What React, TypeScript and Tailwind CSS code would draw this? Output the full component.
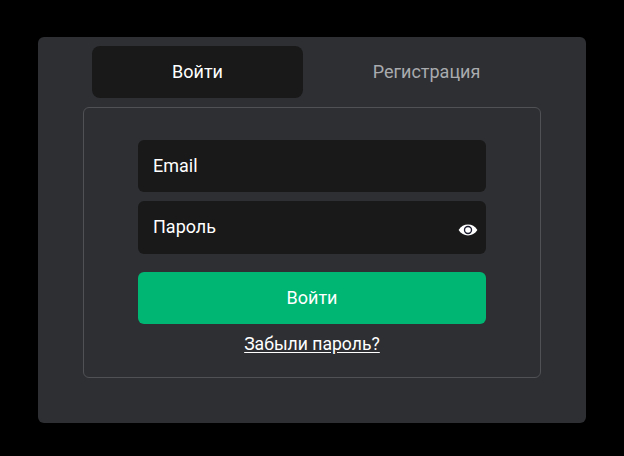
const font = "font-['Roboto','Noto_Sans',sans-serif]";

const Eye = () => (
  <svg width="20" height="14" viewBox="0 0 20 14" className="absolute right-[8px] top-[22px]">
    <path d="M0.6 7C3 3.2 6.2 1.6 10 1.6S17 3.2 19.4 7C17 10.8 13.8 12.4 10 12.4S3 10.8 0.6 7Z" fill="#fff" />
    <circle cx="10" cy="7" r="4.2" fill="#1c1c30" />
    <circle cx="10" cy="7" r="2.8" fill="#fff" />
  </svg>
);

export default function App() {
  return (
    <div className={`w-[624px] h-[456px] bg-black pt-[37px] pl-[38px] ${font}`}>
      <div className="w-[548px] h-[386px] bg-[#2e2f33] rounded-[6px] pt-[9px] px-[45px]">
        <div className="flex gap-[18px] px-[9px] mb-[9px]">
          <button className="w-[211px] h-[52px] pb-[2px] bg-[#191919] rounded-[8px] text-white text-[18px]">Войти</button>
          <button className="w-[211px] h-[52px] pb-[2px] text-[#a9abae] text-[18px]">Регистрация</button>
        </div>
        <div className="w-[458px] h-[271px] border border-[#505155] rounded-[6px] pt-[32px] px-[54px]">
          <div className="flex flex-col">
            <div className="h-[52px] bg-[#191919] rounded-[6px] pl-[15px] pb-[2px] flex items-center text-white text-[18px]">Email</div>
            <div className="relative h-[53px] mt-[9px] bg-[#191919] rounded-[6px] pl-[15px] pb-[2px] flex items-center text-white text-[18px]">
              Пароль
              <Eye />
            </div>
            <button className="h-[52px] mt-[18px] pb-[2px] bg-[#00b673] rounded-[6px] text-white text-[18px]">Войти</button>
            <a className="mt-[9px] text-center text-white text-[17.6px] leading-[22px] underline underline-offset-2">Забыли пароль?</a>
          </div>
        </div>
      </div>
    </div>
  );
}
